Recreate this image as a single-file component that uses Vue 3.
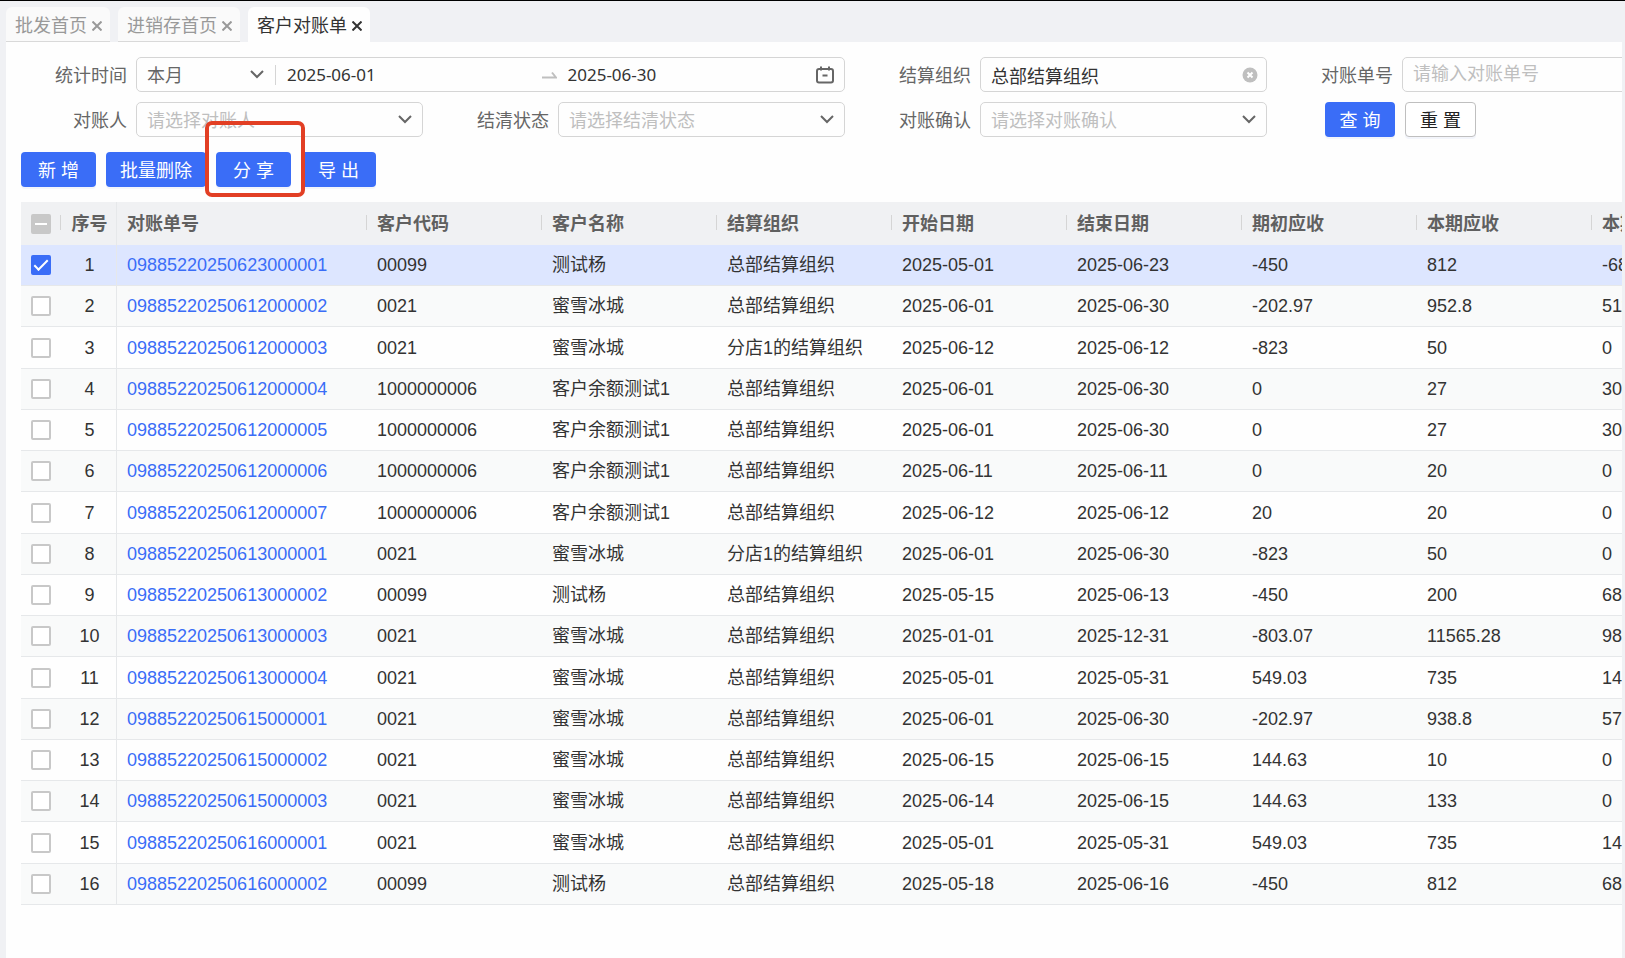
<script setup>
import { ref } from 'vue'

const tabs = [
  { name: '批发首页', active: false },
  { name: '进销存首页', active: false },
  { name: '客户对账单', active: true },
]

const columns = ['客户代码', '客户名称', '结算组织', '开始日期', '结束日期', '期初应收', '本期应收', '本期实收']

const HQ = '总部结算组织'
const BRANCH = '分店1的结算组织'
const MX = '蜜雪冰城'
const KH = '客户余额测试1'
const CS = '测试杨'

const rows = ref([
  ['09885220250623000001', '00099', CS, HQ, '2025-05-01', '2025-06-23', '-450', '812', '-688'],
  ['09885220250612000002', '0021', MX, HQ, '2025-06-01', '2025-06-30', '-202.97', '952.8', '511'],
  ['09885220250612000003', '0021', MX, BRANCH, '2025-06-12', '2025-06-12', '-823', '50', '0'],
  ['09885220250612000004', '1000000006', KH, HQ, '2025-06-01', '2025-06-30', '0', '27', '30'],
  ['09885220250612000005', '1000000006', KH, HQ, '2025-06-01', '2025-06-30', '0', '27', '30'],
  ['09885220250612000006', '1000000006', KH, HQ, '2025-06-11', '2025-06-11', '0', '20', '0'],
  ['09885220250612000007', '1000000006', KH, HQ, '2025-06-12', '2025-06-12', '20', '20', '0'],
  ['09885220250613000001', '0021', MX, BRANCH, '2025-06-01', '2025-06-30', '-823', '50', '0'],
  ['09885220250613000002', '00099', CS, HQ, '2025-05-15', '2025-06-13', '-450', '200', '68'],
  ['09885220250613000003', '0021', MX, HQ, '2025-01-01', '2025-12-31', '-803.07', '11565.28', '98'],
  ['09885220250613000004', '0021', MX, HQ, '2025-05-01', '2025-05-31', '549.03', '735', '14'],
  ['09885220250615000001', '0021', MX, HQ, '2025-06-01', '2025-06-30', '-202.97', '938.8', '57'],
  ['09885220250615000002', '0021', MX, HQ, '2025-06-15', '2025-06-15', '144.63', '10', '0'],
  ['09885220250615000003', '0021', MX, HQ, '2025-06-14', '2025-06-15', '144.63', '133', '0'],
  ['09885220250616000001', '0021', MX, HQ, '2025-05-01', '2025-05-31', '549.03', '735', '14'],
  ['09885220250616000002', '00099', CS, HQ, '2025-05-18', '2025-06-16', '-450', '812', '68'],
].map((cells, i) => ({ no: cells[0], cells: cells.slice(1), checked: i === 0 })))
</script>

<template>
  <div class="page">
    <nav class="tabs">
      <div v-for="t in tabs" :key="t.name" class="tab" :class="{ active: t.active }">
        <a href="#">{{ t.name }}</a>
        <button type="button" class="close" :aria-label="'关闭' + t.name">
          <svg width="10" height="10" viewBox="0 0 10 10"><path d="M0.500 0.500l9 9M9.500 0.500l-9 9" /></svg>
        </button>
      </div>
    </nav>

    <main class="panel">
      <form class="filters" @submit.prevent>
        <div class="field wide">
          <label for="period">统计时间</label>
          <div class="control range">
            <div class="period">
              <select id="period"><option>本月</option></select>
              <svg class="chevron" width="14" height="9" viewBox="0 0 14 9"><path d="M1 1l6 6 6-6" /></svg>
            </div>
            <input class="date" type="text" value="2025-06-01" aria-label="开始日期" />
            <svg class="arrow" width="15" height="8" viewBox="0 0 15 8"><path d="M0 6.500h14l-4-5" /></svg>
            <input class="date" type="text" value="2025-06-30" aria-label="结束日期" />
            <svg class="calendar" width="18" height="18" viewBox="0 0 18 18">
              <rect x="1" y="3" width="16" height="13.500" rx="2" />
              <path d="M5 0.500v4M13 0.500v4M6.500 9.500h5" />
            </svg>
          </div>
        </div>
        <div class="field">
          <label for="org">结算组织</label>
          <div class="control">
            <input id="org" type="text" value="总部结算组织" />
            <button type="button" class="clear" aria-label="清除">
              <svg width="16" height="16" viewBox="0 0 16 16"><circle cx="8" cy="8" r="7.500" /><path d="M5.500 5.500l5 5M10.500 5.500l-5 5" /></svg>
            </button>
          </div>
        </div>
        <div class="field">
          <label for="billno">对账单号</label>
          <div class="control"><input id="billno" type="text" placeholder="请输入对账单号" /></div>
        </div>

        <div v-for="f in [['person', '对账人'], ['settled', '结清状态'], ['confirm', '对账确认']]" :key="f[0]" class="field">
          <label :for="f[0]">{{ f[1] }}</label>
          <div class="control">
            <select :id="f[0]" class="empty"><option>请选择{{ f[1] }}</option></select>
            <svg class="chevron" width="14" height="9" viewBox="0 0 14 9"><path d="M1 1l6 6 6-6" /></svg>
          </div>
        </div>
        <div class="actions">
          <button type="submit" class="btn small">查 询</button>
          <button type="reset" class="btn small plain">重 置</button>
        </div>
      </form>

      <div class="toolbar">
        <button type="button" class="btn">新 增</button>
        <button type="button" class="btn">批量删除</button>
        <div class="highlighted"><button type="button" class="btn">分 享</button></div>
        <button type="button" class="btn">导 出</button>
      </div>

      <div class="grid">
        <table>
          <colgroup>
            <col class="c-check" /><col class="c-index" /><col class="c-no" />
            <col v-for="c in columns" :key="c" class="c-data" />
          </colgroup>
          <thead>
            <tr>
              <th class="check"><input type="checkbox" class="partial" aria-label="全选" /></th>
              <th class="index">序号</th>
              <th>对账单号</th>
              <th v-for="c in columns" :key="c">{{ c }}</th>
            </tr>
          </thead>
          <tbody>
            <tr v-for="(r, i) in rows" :key="r.no" :class="{ selected: r.checked }">
              <td class="check"><input v-model="r.checked" type="checkbox" :aria-label="'选择' + r.no" /></td>
              <td class="index">{{ i + 1 }}</td>
              <td><a href="#">{{ r.no }}</a></td>
              <td v-for="(c, j) in r.cells" :key="j">{{ c }}</td>
            </tr>
          </tbody>
        </table>
      </div>
    </main>
  </div>
</template>

<style>
body {
  background: #f0f1f4;
}
</style>

<style scoped>
.page {
  box-sizing: border-box;
  min-height: 100vh;
  display: flex;
  flex-direction: column;
  padding: 6px 3px 0 6px;
  border-top: 1px solid #000;
  background: #f0f1f4;
  color: #333;
  font-family: "Liberation Sans", "Noto Sans CJK SC", sans-serif;
  font-size: 18px;
  line-height: 24px;
}
.page *,
.page *::before,
.page *::after {
  box-sizing: border-box;
}
button,
input,
select {
  margin: 0;
  padding: 0;
  border: 0;
  background: transparent;
  color: inherit;
  font: inherit;
  outline: 0;
}
a {
  color: inherit;
  text-decoration: none;
}
svg {
  display: block;
  flex: none;
  fill: none;
  stroke: #666;
  stroke-width: 2;
}

.tabs {
  display: flex;
  gap: 8px;
}
.tab {
  display: flex;
  align-items: center;
  gap: 5px;
  height: 35px;
  padding: 3px 8px 0 9px;
  border-bottom: 1px solid #d9d9d9;
  border-radius: 6px 6px 0 0;
  background: #fafafa;
  color: #999;
}
.tab svg {
  stroke: #999;
}
.tab.active {
  border-color: #fefefe;
  background: #fefefe;
  color: #333;
}
.tab.active svg {
  stroke: #333;
}

.panel {
  flex: 1;
  padding: 15px 0 0 15px;
  background: #fefefe;
  overflow: hidden;
}
.filters {
  display: grid;
  grid-template-columns: repeat(4, minmax(422px, 1fr));
  row-gap: 10px;
}
.field {
  display: flex;
  align-items: center;
  gap: 10px;
  padding-right: 20px;
}
.wide {
  grid-column: span 2;
}
.field label {
  width: 106px;
  margin-right: -1px;
  padding-top: 2px;
  flex: none;
  color: #666;
  text-align: right;
}
.control {
  flex: 1;
  min-width: 0;
  display: flex;
  align-items: center;
  height: 35px;
  position: relative;
  border: 1px solid #d5d5d5;
  border-radius: 5px;
}
.control input,
.control select {
  flex: 1;
  min-width: 0;
  height: 33px;
  padding: 0 10px;
  appearance: none;
}
.control select {
  padding-top: 2px;
}
.control input::placeholder,
.control .empty {
  color: #bfbfbf;
  opacity: 1;
}
.control > .chevron {
  position: absolute;
  right: 10px;
  pointer-events: none;
}
.clear {
  margin-right: 8px;
}
.clear svg {
  fill: #bfbfbf;
  stroke: none;
}
.clear path {
  stroke: #fff;
}
.period {
  display: flex;
  align-items: center;
  width: 139px;
  height: 20px;
  padding-right: 11px;
  border-right: 1px solid #d5d5d5;
  color: #666;
}
.control .date {
  padding: 0 11px;
  font-family: "Noto Sans", sans-serif;
  font-size: 17px;
}
.arrow {
  margin-left: 6px;
  stroke: #bfbfbf;
}
.calendar {
  margin-right: 10px;
}
.actions {
  display: flex;
  gap: 10px;
  padding-left: 38px;
}

.btn {
  min-width: 75px;
  height: 35px;
  padding: 2px 14px 0;
  border-radius: 4px;
  background: #3a6df7;
  box-shadow: 0 2px 0 #f3f5fb;
  color: #fff;
  white-space: nowrap;
}
.btn.small {
  min-width: 70px;
}
.btn.plain {
  border: 1px solid #bfbfbf;
  background: #fff;
  color: #222;
}
.toolbar {
  display: flex;
  gap: 10px;
  margin: 15px 0;
}
.highlighted {
  position: relative;
}
.highlighted::after {
  content: "";
  position: absolute;
  z-index: 1;
  inset: -31px -14px -10px -11px;
  border: 4px solid #e23f24;
  border-radius: 7px;
  pointer-events: none;
}

table {
  width: 100%;
  min-width: 1746px;
  table-layout: fixed;
  border-collapse: separate;
  border-spacing: 0;
}
.c-check {
  width: 40px;
}
.c-index {
  width: 56px;
}
.c-no {
  width: 250px;
}
th,
td {
  padding: 0 10px;
  text-align: left;
  white-space: nowrap;
}
th {
  height: 43px;
  position: relative;
  background: #f0f1f3;
  color: #606060;
}
th:not(.index)::after {
  content: "";
  position: absolute;
  top: 13px;
  right: 0;
  width: 1px;
  height: 15px;
  background: #d5d5d5;
}
td {
  height: 41px;
  border-bottom: 1px solid #e6e8ea;
}
tr:nth-child(4n + 3) td {
  height: 42px;
}
tbody tr:nth-child(even) {
  background: #f9fafa;
}
tbody tr.selected {
  background: #dde6ff;
}
td a {
  color: #3a6df7;
}
.index {
  padding: 0 0 0 2px;
  border-right: 1px solid #e6e8ea;
  text-align: center;
}
.check {
  line-height: 0;
}
.check input {
  display: grid;
  place-items: center;
  width: 20px;
  height: 20px;
  border: 2px solid #c8c8c8;
  border-radius: 2px;
  background: #fff;
  appearance: none;
}
.check .partial {
  background: #c8c8c8;
}
.check .partial::before {
  content: "";
  width: 12px;
  height: 2px;
  background: #fff;
}
.check input:checked {
  border-color: #3a6df7;
  background: #3a6df7;
}
.check input:checked::before {
  content: "";
  width: 14px;
  height: 7px;
  margin-top: -4px;
  border: solid #fff;
  border-width: 0 0 2px 2px;
  transform: rotate(-45deg);
}
</style>
